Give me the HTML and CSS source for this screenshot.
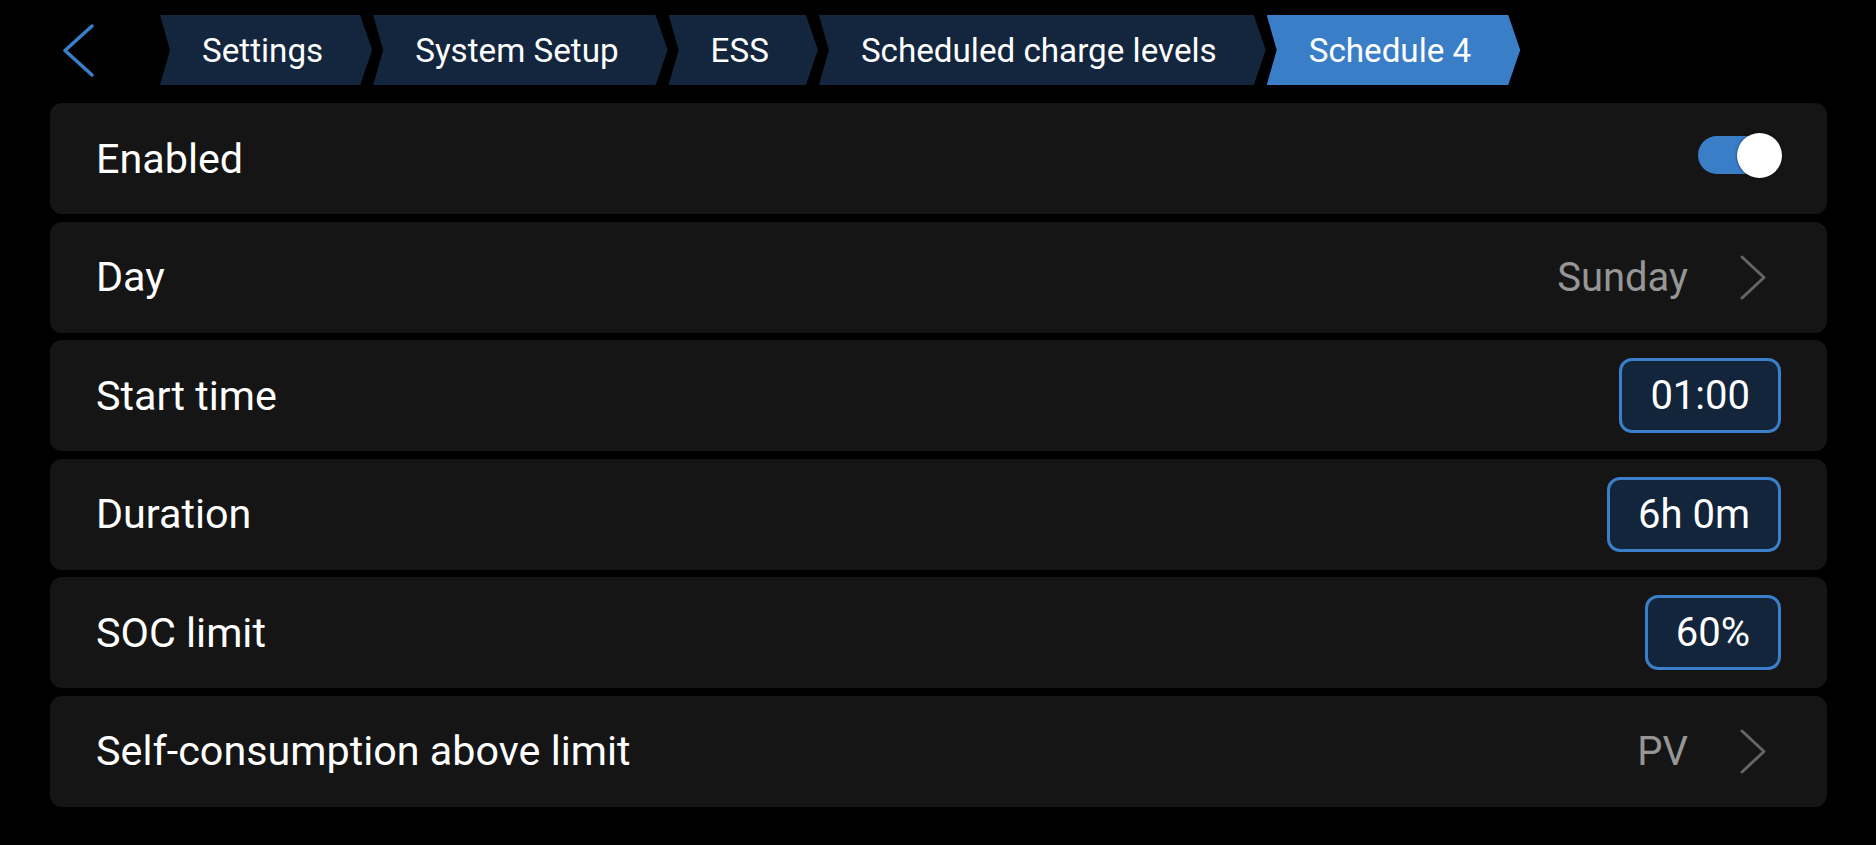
FILE: index.html
```html
<!DOCTYPE html>
<html>
<head>
<meta charset="utf-8">
<link rel="stylesheet" href="styles.css">
</head>
<body>
<header class="header">
  <svg class="back" width="31" height="53" viewBox="0 0 31 53"><polyline points="29,2 2,26.5 29,51" fill="none" stroke="#3a7ec8" stroke-width="3.5" stroke-linecap="round" stroke-linejoin="round"/></svg>
  <nav class="crumbs">
    <div class="crumb">Settings</div>
    <div class="crumb">System Setup</div>
    <div class="crumb">ESS</div>
    <div class="crumb">Scheduled charge levels</div>
    <div class="crumb active">Schedule 4</div>
  </nav>
</header>
<main class="list">
  <div class="row">
    <span class="label">Enabled</span>
    <div class="toggle"><div class="track"></div><div class="knob"></div></div>
  </div>
  <div class="row">
    <span class="label">Day</span>
    <div class="right">
      <span class="value">Sunday</span>
      <svg class="chev" width="26" height="45" viewBox="0 0 26 45"><polyline points="2,2 24,22.5 2,43" fill="none" stroke="#656565" stroke-width="3" stroke-linecap="round" stroke-linejoin="round"/></svg>
    </div>
  </div>
  <div class="row">
    <span class="label">Start time</span>
    <div class="box">01:00</div>
  </div>
  <div class="row">
    <span class="label">Duration</span>
    <div class="box">6h 0m</div>
  </div>
  <div class="row">
    <span class="label">SOC limit</span>
    <div class="box">60%</div>
  </div>
  <div class="row">
    <span class="label">Self-consumption above limit</span>
    <div class="right">
      <span class="value">PV</span>
      <svg class="chev" width="26" height="45" viewBox="0 0 26 45"><polyline points="2,2 24,22.5 2,43" fill="none" stroke="#656565" stroke-width="3" stroke-linecap="round" stroke-linejoin="round"/></svg>
    </div>
  </div>
</main>
</body>
</html>
```

FILE: styles.css
```css
html, body {
  margin: 0;
  padding: 0;
  background: #000;
  width: 1876px;
  height: 845px;
  overflow: hidden;
  font-family: Roboto, "Liberation Sans", sans-serif;
  color: #fff;
}

.header {
  display: flex;
  align-items: center;
  height: 70px;
  padding-top: 15px;
}

.back {
  margin-left: 63px;
  display: block;
}

.crumbs {
  display: flex;
  gap: 1px;
  margin-left: 66px;
  height: 70px;
}

.crumb {
  display: flex;
  align-items: center;
  height: 70px;
  padding: 0 49px 0 42px;
  background: #13263d;
  font-size: 33.2px;
  color: #fff;
  white-space: nowrap;
  clip-path: polygon(0 0, calc(100% - 12px) 0, 100% 50%, calc(100% - 12px) 100%, 0 100%, 10px 50%);
}

.crumb.active {
  background: #3a7ec8;
}

.list {
  display: flex;
  flex-direction: column;
  gap: 7.6px;
  margin: 18px 49px 0 50px;
}

.row {
  display: flex;
  align-items: center;
  justify-content: space-between;
  height: 111px;
  padding: 0 45px 0 46px;
  background: #151515;
  border-radius: 12px;
  box-sizing: border-box;
}

.label {
  font-size: 41.3px;
  color: #fff;
}

.right {
  display: flex;
  align-items: center;
  margin-right: 16px;
}

.value {
  font-size: 40px;
  color: #969696;
}

.chev {
  display: block;
  margin-left: 52px;
}

.box {
  display: flex;
  align-items: center;
  height: 75px;
  box-sizing: border-box;
  padding: 0 28px;
  margin-right: 1px;
  border: 3px solid #3b7fcb;
  border-radius: 13px;
  background: #12253b;
  font-size: 40px;
  color: #fff;
}

.toggle {
  position: relative;
  width: 84px;
  height: 45px;
  margin-bottom: 7px;
}

.track {
  position: absolute;
  left: 0;
  top: 3.5px;
  width: 81px;
  height: 38px;
  border-radius: 19px;
  background: #3a7ec8;
}

.knob {
  position: absolute;
  right: 0;
  top: 0;
  width: 45px;
  height: 45px;
  border-radius: 50%;
  background: #fff;
  box-shadow: 0 0 3px rgba(0, 0, 0, 0.6);
}
```
